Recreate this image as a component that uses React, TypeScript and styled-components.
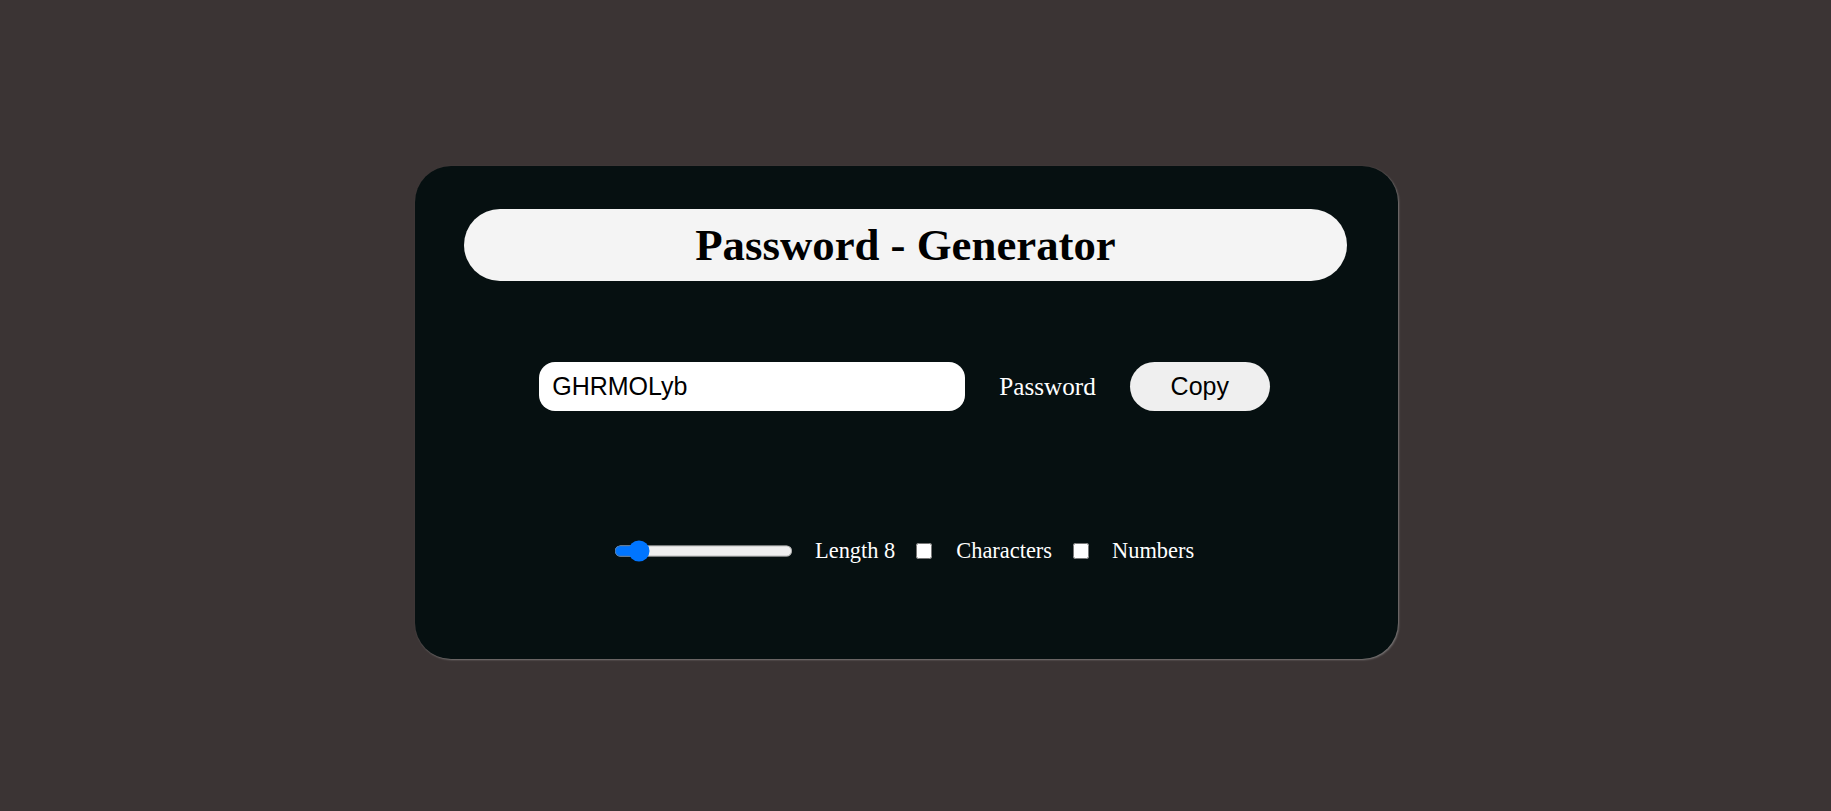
import React, { useState } from 'react'
import styled, { createGlobalStyle } from 'styled-components'

const GlobalStyle = createGlobalStyle`
    html, body {
        margin: 0;
        padding: 0;
        background: #3b3434;
        font-family: "Liberation Serif", "Times New Roman", serif;
    }
`

const Page = styled.div`
    width: 100%;
    min-height: 811px;
    padding-top: 166px;
    box-sizing: border-box;
`

const Card = styled.div`
    width: 983px;
    height: 493px;
    margin-left: 415px;
    box-sizing: border-box;
    padding: 43px 51px 0 49px;
    background: #061011;
    border-radius: 36px;
    box-shadow: 1px 1px 2px rgba(200, 200, 200, 0.45);
    display: flex;
    flex-direction: column;
    align-items: stretch;
`

const Title = styled.h1`
    margin: 0;
    height: 72px;
    border-radius: 36px;
    background: #f4f4f4;
    color: #000;
    font-family: "Liberation Serif", "Times New Roman", serif;
    font-weight: 700;
    font-size: 44.8px;
    display: flex;
    align-items: center;
    justify-content: center;
`

const PassRow = styled.div`
    margin-top: 81px;
    margin-right: 2px;
    display: flex;
    align-items: center;
    justify-content: center;
    gap: 34px;
`

const PassInput = styled.input`
    width: 426px;
    height: 49px;
    box-sizing: border-box;
    border: none;
    outline: none;
    border-radius: 16px;
    background: #fff;
    padding: 0 13px;
    font-family: "Liberation Sans", Arial, sans-serif;
    font-size: 25px;
    color: #000;
`

const Label = styled.label<{ $size?: number }>`
    color: #fff;
    font-family: "Liberation Serif", "Times New Roman", serif;
    font-size: ${(p) => p.$size ?? 22.4}px;
    white-space: nowrap;
`

const CopyButton = styled.button`
    width: 140px;
    height: 49px;
    border: none;
    border-radius: 25px;
    background: #efefef;
    color: #000;
    font-family: "Liberation Sans", Arial, sans-serif;
    font-size: 25px;
    cursor: pointer;
`

const OptionsRow = styled.div`
    margin-top: 129px;
    margin-right: 3px;
    height: 22px;
    display: flex;
    align-items: center;
    justify-content: center;
`

const Range = styled.input`
    width: 128px;
    margin: 0;
    zoom: 1.4;
    cursor: pointer;
`

const Check = styled.input`
    width: 16px;
    height: 16px;
    margin: 0;
`

const Gap = styled.span<{ $w: number }>`
    display: inline-block;
    width: ${(p) => p.$w}px;
`

export default function App() {
    const [length, setLength] = useState(8)
    const [password] = useState('GHRMOLyb')

    return (
        <>
            <GlobalStyle />
            <Page>
                <Card>
                    <Title>Password - Generator</Title>

                    <PassRow>
                        <PassInput type="text" value={password} readOnly />
                        <Label $size={25.2}>Password</Label>
                        <CopyButton>Copy</CopyButton>
                    </PassRow>

                    <OptionsRow>
                        <Range
                            type="range"
                            min={0}
                            max={90}
                            value={length}
                            onChange={(e) => setLength(Number(e.target.value))}
                        />
                        <Gap $w={22} />
                        <Label>Length {length}</Label>
                        <Gap $w={21} />
                        <Check type="checkbox" id="chars" />
                        <Gap $w={24} />
                        <Label htmlFor="chars">Characters</Label>
                        <Gap $w={21} />
                        <Check type="checkbox" id="nums" />
                        <Gap $w={23} />
                        <Label htmlFor="nums">Numbers</Label>
                    </OptionsRow>
                </Card>
            </Page>
        </>
    )
}
